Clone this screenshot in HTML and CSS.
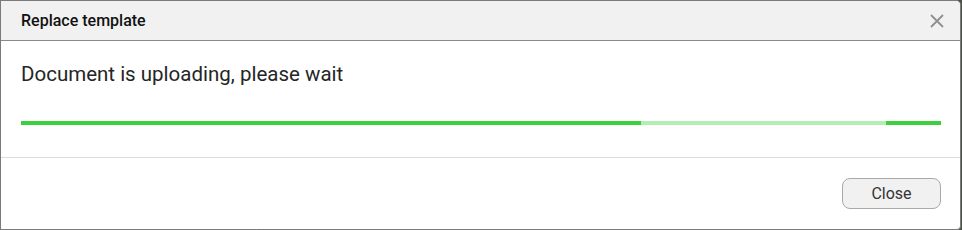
FILE: index.html
```html
<!DOCTYPE html>
<html lang="en">
<head>
  <meta charset="UTF-8">
  <title>Replace template</title>
  <link rel="stylesheet" href="styles.css">
</head>
<body>

  <div class="dialog">
    <div class="dialog-header">
      <span class="dialog-title">Replace template</span>
      <span class="close">
        <svg width="14" height="14" viewBox="0 0 14 14">
          <path d="M1 1 L13 13 M13 1 L1 13" stroke="#8f8f8f" stroke-width="1.8" fill="none"/>
        </svg>
      </span>
    </div>
    <div class="dialog-body">
      <p class="message">Document is uploading, please wait</p>
      <div class="progress">
        <div class="seg done" style="width: 620px"></div>
        <div class="seg pending" style="width: 245px"></div>
        <div class="seg done rest"></div>
      </div>
    </div>
    <div class="dialog-footer">
      <button class="btn">Close</button>
    </div>
  </div>

</body>
</html>
```

FILE: styles.css
```css
* {
  box-sizing: border-box;
}
body {
  margin: 0;
  background: #4a5248;
  font-family: Roboto, 'Liberation Sans', sans-serif;
  width: 962px;
  height: 230px;
  overflow: hidden;
}
.dialog {
  width: 961px;
  height: 230px;
  background: #fff;
  border: 1px solid #7a7a7a;
  border-radius: 0 5px 4px 0;
  display: flex;
  flex-direction: column;
}
.dialog-header {
  height: 40px;
  background: #f1f1f1;
  border-bottom: 1px solid #8a8a8a;
  border-radius: 0 4px 0 0;
  display: flex;
  align-items: center;
  justify-content: space-between;
  padding: 0 16px 0 20px;
}
.dialog-title {
  font-size: 16px;
  font-weight: 500;
  color: #111;
}
.close {
  display: flex;
  cursor: pointer;
}
.dialog-body {
  padding: 21px 19px 32px 20px;
  border-bottom: 1px solid #dcdcdc;
}
.message {
  margin: 0;
  font-size: 20.5px;
  line-height: 24px;
  color: #252525;
}
.progress {
  margin-top: 35px;
  height: 4px;
  display: flex;
}
.seg {
  height: 4px;
}
.done {
  background: #3dd03d;
}
.pending {
  background: #b3efb3;
}
.rest {
  flex: 1;
}
.dialog-footer {
  flex: 1;
  display: flex;
  justify-content: flex-end;
  align-items: flex-start;
  padding: 20px 19px 0 0;
}
.btn {
  width: 99px;
  height: 31px;
  background: #f1f1f1;
  border: 1px solid #a9a9a9;
  border-radius: 8px;
  font-family: Roboto, 'Liberation Sans', sans-serif;
  font-size: 16px;
  color: #333;
  cursor: pointer;
}
.btn:hover {
  background: #e6e6e6;
}
```
